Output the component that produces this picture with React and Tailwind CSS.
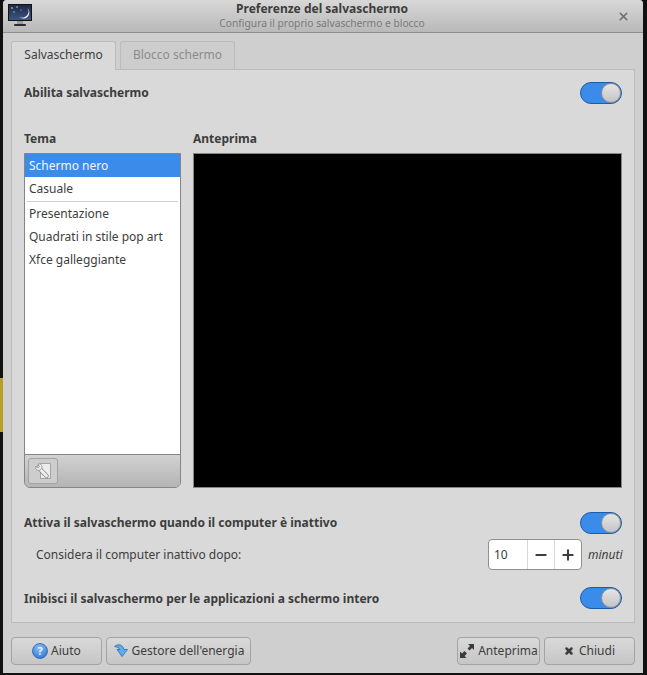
import { Minus, Plus, X } from "lucide-react";

function Toggle() {
  return (
    <div className="flex h-[22px] w-[42px] shrink-0 justify-end rounded-full border border-[#1f5aa6] bg-[#3b8beb]">
      <div className="h-[20px] w-[20px] rounded-full border border-[#8f8f8f] bg-gradient-to-b from-[#e6e6e6] to-[#c4c4c4]" />
    </div>
  );
}

function Button({ className, icon, children }) {
  return (
    <button className={`flex h-[28px] items-center justify-center gap-[3px] rounded-[4px] border border-[#a3a3a3] bg-gradient-to-b from-[#d9d9d9] to-[#c6c6c6] text-[#3d3d3d] ${className}`}>
      {icon}
      <span>{children}</span>
    </button>
  );
}

function MonitorIcon() {
  return (
    <svg width="24" height="22" viewBox="0 0 24 22" className="shrink-0">
      <defs>
        <linearGradient id="screen" x1="0" y1="0" x2="0" y2="1">
          <stop offset="0" stopColor="#1c2a46" />
          <stop offset="1" stopColor="#40557f" />
        </linearGradient>
      </defs>
      <rect x="0" y="0" width="24" height="17" fill="#141414" />
      <rect x="1" y="1" width="22" height="15" fill="url(#screen)" />
      <path d="M19.500 4a6 6 0 1 1-8.500 8.800 6.300 6.300 0 0 0 8.500-8.800z" fill="#eef2f7" />
      <circle cx="4" cy="4" r="0.8" fill="#dfe6f0" />
      <circle cx="9" cy="3" r="0.7" fill="#dfe6f0" />
      <circle cx="6" cy="8" r="0.7" fill="#c8d2e0" />
      <circle cx="13" cy="6" r="0.6" fill="#c8d2e0" />
      <rect x="9" y="17" width="6" height="3" fill="#9a9a9a" />
      <rect x="6" y="20" width="12" height="2" rx="1" fill="#2a2a2a" />
    </svg>
  );
}

function HelpIcon() {
  return (
    <svg width="16" height="16" viewBox="0 0 16 16" className="shrink-0">
      <defs>
        <radialGradient id="help" cx="0.45" cy="0.3" r="0.8">
          <stop offset="0" stopColor="#8cc0f5" />
          <stop offset="1" stopColor="#2a6fd0" />
        </radialGradient>
      </defs>
      <circle cx="8" cy="8" r="7.500" fill="url(#help)" stroke="#2a62b5" strokeWidth="0.8" />
      <text x="8" y="12" textAnchor="middle" fontSize="11" fontWeight="700" fill="#e8f1fb" fontFamily="Noto Sans, sans-serif">?</text>
    </svg>
  );
}

function EnergyIcon() {
  return (
    <svg width="16" height="16" viewBox="0 0 16 16" className="shrink-0">
      <path d="M1.500 3.500C5 .5 10 1.500 11 6.500h3.500L9 13.500l-5-7h3C6.500 5 4 3.800 1.500 3.500z" fill="#62ade9" stroke="#2f74b8" strokeWidth="0.9" strokeLinejoin="round" />
    </svg>
  );
}

function ExpandIcon() {
  return (
    <svg width="16" height="16" viewBox="0 0 16 16" className="shrink-0">
      <path d="M15 1v6l-2-2-2.500 2.500-2-2L11 3 9 1zM1 15V8.500l2 2 2.500-2.500 2.500 2.500L5.500 13l2 2z" fill="#3a3a3a" />
    </svg>
  );
}

function ToolIcon() {
  return (
    <svg width="18" height="18" viewBox="0 0 18 18">
      <rect x="6.500" y="1.500" width="10" height="15" fill="#ececec" stroke="#a4a4a4" />
      <g fill="none" strokeLinecap="round">
        <path d="M4.500 5.500l8 8.500" stroke="#8f8f8f" strokeWidth="4.500" />
        <path d="M4.500 5.500l8 8.500" stroke="#efefef" strokeWidth="2.800" />
      </g>
      <path d="M1.500 4.500l2.500 1.500 1.500-1.500L4 2c2-.7 4 .5 4 3 0 2.500-3 4-5 3-1.300-.6-1.800-2-1.500-3.500z" fill="#efefef" stroke="#8f8f8f" strokeWidth="0.8" strokeLinejoin="round" />
    </svg>
  );
}

export default function App() {
  const themes = ["Presentazione", "Quadrati in stile pop art", "Xfce galleggiante"];

  return (
    <div className="relative h-[675px] w-[647px] overflow-hidden bg-[#111111] pb-[2px] pl-[3px] pr-[4px] text-[12px] leading-[16px] text-[#3d3d3d] [font-family:'Noto_Sans',sans-serif]">
      <div className="absolute left-0 top-[378px] h-[54px] w-[3px] bg-[#b5a02a]" />
      <div className="flex h-full flex-col rounded-t-[4px] bg-[#cfcfcf]">
        <div className="flex h-[33px] shrink-0 items-center rounded-t-[4px] border-b border-[#8f8f8f] bg-gradient-to-b from-[#d8d8d8] to-[#b9b9b9] pl-[5px] pr-[13px]">
          <div className="-mt-[2px]">
            <MonitorIcon />
          </div>
          <div className="flex flex-1 flex-col items-center pb-[1px] pr-[5px]">
            <div className="text-[12px] font-bold leading-[15px]">Preferenze del salvaschermo</div>
            <div className="text-[10.25px] leading-[15px] text-[#7a7a7a]">Configura il proprio salvaschermo e blocco</div>
          </div>
          <X size={13} strokeWidth={3} className="text-[#6e6e6e]" />
        </div>

        <div className="flex flex-1 flex-col px-[8px] pt-[8px]">
          <div className="z-10 flex h-[29px] shrink-0 gap-[4px]">
            <div className="flex h-[29px] w-[105px] items-center justify-center rounded-t-[3px] border border-b-0 border-[#bcbcbc] bg-[#d9d9d9] pb-[2px]">Salvaschermo</div>
            <div className="flex h-[28px] w-[115px] items-center justify-center rounded-t-[3px] border border-b-0 border-[#bcbcbc] bg-[#cdcdcd] pb-[1px] text-[#8b8b8b]">Blocco schermo</div>
          </div>

          <div className="-mt-px flex h-[554px] shrink-0 flex-col border border-[#bcbcbc] bg-[#d9d9d9] px-[12px]">
            <div className="mt-[12px] flex h-[22px] items-center justify-between">
              <span className="pb-[1px] font-bold">Abilita salvaschermo</span>
              <Toggle />
            </div>

            <div className="mt-[26px] flex h-[358px] gap-[12px]">
              <div className="flex w-[157px] shrink-0 flex-col">
                <div className="h-[23px] pt-[1px] font-bold">Tema</div>
                <div className="flex flex-1 flex-col overflow-hidden rounded-b-[6px] border border-[#858585]">
                  <div className="flex-1 bg-white">
                    <div className="flex h-[23px] items-center bg-[#3b8beb] pl-[4px] text-[#f2f6fc]">Schermo nero</div>
                    <div className="flex h-[23px] items-center pl-[4px]">Casuale</div>
                    <div className="mx-[2px] mt-[1px] h-px bg-[#cfcfcf]" />
                    {themes.map((theme) => (
                      <div key={theme} className="flex h-[23px] items-center pl-[4px]">{theme}</div>
                    ))}
                  </div>
                  <div className="flex h-[33px] shrink-0 items-center border-t border-[#858585] bg-gradient-to-b from-[#d2d2d2] to-[#b4b4b4] pl-[3px]">
                    <button className="flex h-[26px] w-[30px] items-center justify-center rounded-[3px] border border-[#a3a3a3] bg-[#cdcdcd]">
                      <ToolIcon />
                    </button>
                  </div>
                </div>
              </div>
              <div className="flex flex-1 flex-col">
                <div className="h-[23px] pt-[1px] font-bold">Anteprima</div>
                <div className="flex-1 border border-[#858585] bg-black" />
              </div>
            </div>

            <div className="mt-[24px] flex h-[22px] items-center justify-between">
              <span className="font-bold">Attiva il salvaschermo quando il computer è inattivo</span>
              <Toggle />
            </div>
            <div className="mt-[5px] flex h-[31px] items-center pl-[12px]">
              <span className="flex-1">Considera il computer inattivo dopo:</span>
              <div className="flex h-[31px] w-[94px] items-stretch overflow-hidden rounded-[4px] border border-[#8f8f8f] bg-white">
                <div className="flex w-[38px] items-center pl-[5px]">10</div>
                <div className="flex w-[27px] items-center justify-center border-l border-[#d8d8d8]">
                  <Minus size={16} strokeWidth={3} />
                </div>
                <div className="flex flex-1 items-center justify-center border-l border-[#d8d8d8]">
                  <Plus size={16} strokeWidth={3} />
                </div>
              </div>
              <span className="ml-[6px] w-[34px] italic">minuti</span>
            </div>
            <div className="mt-[17px] flex h-[22px] items-center justify-between">
              <span className="pt-[1px] font-bold">Inibisci il salvaschermo per le applicazioni a schermo intero</span>
              <Toggle />
            </div>
          </div>

          <div className="mt-[14px] flex items-center gap-[4px]">
            <Button className="w-[91px]" icon={<HelpIcon />}>Aiuto</Button>
            <Button className="w-[145px]" icon={<EnergyIcon />}>Gestore dell'energia</Button>
            <div className="flex-1" />
            <Button className="w-[83px]" icon={<ExpandIcon />}>Anteprima</Button>
            <Button className="w-[91px] gap-[5px]" icon={<X size={10} strokeWidth={6} />}>Chiudi</Button>
          </div>
        </div>
      </div>
    </div>
  );
}
